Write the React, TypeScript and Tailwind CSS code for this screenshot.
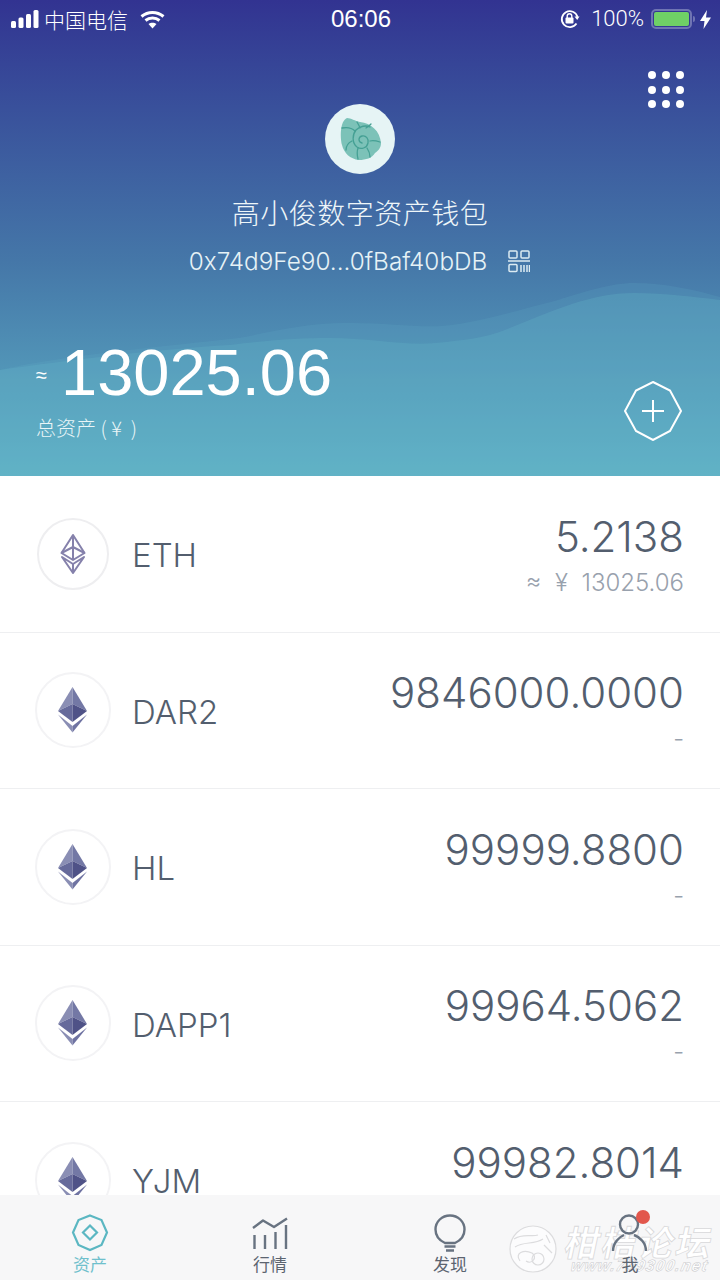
const sans = 'font-["Inter","Noto_Sans_CJK_SC",sans-serif]';
const cjk = 'font-["Noto_Sans_CJK_SC",sans-serif]';

const tokens = [
  { name: 'ETH', amount: '5.2138', sub: '≈  ¥  13025.06', outline: true },
  { name: 'DAR2', amount: '9846000.0000', sub: '-' },
  { name: 'HL', amount: '99999.8800', sub: '-' },
  { name: 'DAPP1', amount: '99964.5062', sub: '-' },
  { name: 'YJM', amount: '99982.8014', sub: '-' },
];

function StatusBar() {
  return (
    <div className="flex h-[38px] items-center justify-between pl-[11px] pr-[9px] text-white">
      <div className="flex w-[240px] items-center">
        <svg width="28" height="18" viewBox="0 0 28 18" fill="white">
          <rect x="0" y="11" width="5" height="7" rx="1.5" />
          <rect x="7.5" y="7.5" width="5" height="10.5" rx="1.5" />
          <rect x="15" y="4" width="5" height="14" rx="1.5" />
          <rect x="22.5" y="0" width="5" height="18" rx="1.5" />
        </svg>
        <span className={`ml-[5px] text-[21px] font-light leading-none ${cjk}`}>中国电信</span>
        <svg className="ml-[12px]" width="25" height="19" viewBox="0 0 25 19" fill="none" stroke="white" strokeWidth="3">
          <path d="M1.5 6.5C8 1 17 1 23.5 6.5" />
          <path d="M5.5 10.5C9.5 7.2 15.5 7.2 19.5 10.5" />
          <path d="M12.5 18.5L8.5 14C10.8 12.2 14.2 12.2 16.5 14Z" fill="white" stroke="none" />
        </svg>
      </div>
      <span className='text-[24px] leading-none font-["Liberation_Sans",sans-serif]'>06:06</span>
      <div className="flex w-[240px] items-center justify-end">
        <svg width="20" height="20" viewBox="0 0 20 20" fill="none" stroke="white" strokeWidth="1.8">
          <path d="M16.5 14.5A8 8 0 1 1 17.5 8" />
          <path d="M14.5 7.5H19.5L17.2 11Z" fill="white" stroke="none" />
          <rect x="5.5" y="8.5" width="8" height="6" rx="1" fill="white" stroke="none" />
          <path d="M7.2 9V7a2.3 2.3 0 0 1 4.6 0v2" strokeWidth="1.4" />
        </svg>
        <span className='ml-[11px] text-[22px] font-light leading-none font-["Roboto",sans-serif]'>100%</span>
        <div className="ml-[7px] flex h-[20px] w-[41px] items-center rounded-[5px] border-2 border-[#6f74b3] p-[1px]">
          <div className="h-full w-full rounded-[2px] bg-[#6fd066]" />
        </div>
        <div className="ml-[1px] h-[6px] w-[2px] rounded-r-sm bg-[#6f74b3]" />
        <svg className="ml-[5px]" width="11" height="19" viewBox="0 0 11 19" fill="white">
          <path d="M7 0L0 11H4.5L3.5 19L11 7.5H6Z" />
        </svg>
      </div>
    </div>
  );
}

function ShellLogo() {
  return (
    <div className="flex h-[70px] w-[70px] items-center justify-center rounded-full bg-[#e6f4f5]">
      <svg width="70" height="70" viewBox="0 0 70 70" fill="none">
        <path d="M22 14C26 14 30 17 35 18C46 19 55 27 56 39C56 44 53 47 50 49C47 54 41 56 34 56C25 55 19 49 17 41C15 33 15 17 22 14Z" fill="#7cc2b8" />
        <g stroke="#45a094" strokeWidth="1.3" strokeLinecap="round">
          <path d="M37 39C33 38 33 33 37 32C41 31 44 35 43 39C42 44 36 46 32 43C27 39 27 31 31 26C35 22 41 21 45 23" />
          <path d="M17 24C22 23 27 24 30 27" />
          <path d="M27 37C23 39 21 42 21 46" />
          <path d="M33 44C32 47 32 51 33 55" />
          <path d="M42 44C44 47 45 50 45 53" />
          <path d="M45 37C48 36 52 37 55 38" />
          <path d="M35 24C34 21 33 20 32 18" />
          <path d="M41 24C44 22 45 21 46 20" />
        </g>
      </svg>
    </div>
  );
}

function QrIcon() {
  return (
    <svg width="22" height="23" viewBox="0 0 22 23" fill="none" stroke="#dcebf2" strokeWidth="1.5">
      <rect x="1" y="1" width="8" height="7" rx="1" />
      <rect x="13" y="1" width="8" height="7" rx="1" />
      <path d="M0 11H22" />
      <rect x="1" y="14.5" width="8" height="7" rx="1" />
      <path d="M13 15V22M16 15V22M19 15V22M21.500 15V22" />
    </svg>
  );
}

function Waves() {
  return (
    <svg className="absolute left-0 top-[280px]" width="720" height="196" viewBox="0 0 720 196">
      <path d="M0 90C70 74 170 66 239 58C280 50 310 43 344 43C390 42 425 50 459 44C495 38 525 28 551 22C585 12 610 3 634 3C665 3 695 10 720 17V196H0Z" fill="#62b3c7" fillOpacity="0.17" />
      <path d="M0 90C70 80 160 69 230 65C270 60 300 58 330 58C370 58 405 66 436 63C465 60 485 58 505 50C550 32 590 13 634 13C665 13 695 17 720 20V196H0Z" fill="#62b3c7" fillOpacity="0.3" />
    </svg>
  );
}

function Header() {
  return (
    <div className="relative h-[476px] shrink-0 overflow-hidden bg-gradient-to-b from-[#323391] via-[#4577a8] via-55% to-[#5fb3c6] text-white">
      <Waves />
      <div className="relative flex h-full flex-col">
        <StatusBar />
        <div className="mr-[36px] mt-[33px] grid w-[36px] grid-cols-3 gap-x-[6.500px] gap-y-[6.500px] self-end">
          {Array.from({ length: 9 }).map((_, i) => (
            <div key={i} className="h-[8px] w-[8px] rounded-full bg-white" />
          ))}
        </div>
        <div className="mt-[-4px] flex flex-col items-center">
          <ShellLogo />
          <div className={`mt-[18px] text-[28px] font-light leading-[40px] tracking-[0.5px] text-[#eef6f9] ${cjk}`}>高小俊数字资产钱包</div>
          <div className="ml-[-1px] mt-[13px] flex items-center">
            <span className={`text-[24.300px] font-[350] leading-[32px] text-[#e6f2f6] ${sans}`}>0x74d9Fe90...0fBaf40bDB</span>
            <span className="ml-[21px] mt-[1px]">
              <QrIcon />
            </span>
          </div>
        </div>
        <div className="mt-auto flex items-end justify-between pb-[34px] pl-[37px] pr-[37px]">
          <div>
            <div className="ml-[-1px] flex items-center">
              <span className='mt-[4px] w-[25px] text-[20px] leading-none font-["Liberation_Sans",sans-serif]'>≈</span>
              <span className='text-[65px] leading-[66px] font-["Liberation_Sans",sans-serif]'>13025.06</span>
            </div>
            <div className={`ml-[-1px] mt-[8px] whitespace-pre text-[20px] font-light leading-[28px] text-[#e9f5f7] ${cjk}`}>总资产 ( ¥  )</div>
          </div>
          <svg width="60" height="60" viewBox="0 0 60 60" fill="none" stroke="white" strokeWidth="2" className="mb-[1px]">
            <path d="M30 1L47 9.500L58 30L47 50L30 59L13 50L2 30L13 9.500Z" />
            <path d="M30 19V41M19 30H41" />
          </svg>
        </div>
      </div>
    </div>
  );
}

function EthIcon({ outline }: { outline?: boolean }) {
  if (outline) {
    return (
      <svg width="26" height="40" viewBox="0 0 26 40" fill="none" stroke="#8581ab" strokeWidth="2" strokeLinejoin="round">
        <path d="M13 1L1.500 19L13 26L24.500 19Z" />
        <path d="M13 1V26M1.500 19L13 13L24.500 19" />
        <path d="M2 23L13 39L24 23L13 30Z" />
        <path d="M13 30V39" />
      </svg>
    );
  }
  return (
    <svg width="30" height="46" viewBox="0 0 30 46">
      <path d="M14.500 0L0 24L14.500 17Z" fill="#8a8eb4" />
      <path d="M14.500 0L29 24L14.500 17Z" fill="#7378a5" />
      <path d="M0 24L14.500 17V35Z" fill="#666a9b" />
      <path d="M29 24L14.500 17V35Z" fill="#4f5287" />
      <path d="M0 27.500L14.500 39V45.500Z" fill="#8a8eb4" />
      <path d="M29 27.500L14.500 39V45.500Z" fill="#6f73a2" />
    </svg>
  );
}

function TokenRow({ name, amount, sub, outline }: (typeof tokens)[number]) {
  return (
    <div className="flex h-[156.500px] shrink-0 items-center justify-between border-b border-[#eeeff1] pl-[35px] pr-[36px]">
      <div className="flex items-center">
        <div className={`flex items-center justify-center rounded-full border-2 ${outline ? 'ml-[2px] mr-[23px] h-[72px] w-[72px] border-[#eeeef0]' : 'mr-[21px] h-[76px] w-[76px] border-[#f3f3f5]'}`}>
          <EthIcon outline={outline} />
        </div>
        <span className={`mt-[4px] text-[33px] font-[350] text-[#535e6e] ${sans}`}>{name}</span>
      </div>
      <div className="flex flex-col items-end pt-[3px]">
        <span className={`text-[42px] font-[350] leading-[48px] text-[#535e6e] ${sans}`}>{amount}</span>
        <span className={`mt-[7px] whitespace-pre text-[24px] font-light leading-[30px] text-[#98a1ad] ${sans}`}>{sub}</span>
      </div>
    </div>
  );
}

function TabItem({ label, active, children }: { label: string; active?: boolean; children: React.ReactNode }) {
  return (
    <div className="relative z-30 flex w-[180px] flex-col items-center">
      <div className="flex h-[40px] items-center justify-center">{children}</div>
      <span className={`text-[17px] leading-[22px] ${active ? 'text-[#6fc0cc]' : 'text-[#5c6470]'} ${cjk}`}>{label}</span>
    </div>
  );
}

function Watermark() {
  return (
    <div className="pointer-events-none absolute bottom-[6px] right-[6px] z-20 flex items-center">
      <svg width="50" height="48" viewBox="0 0 50 48" fill="none" stroke="#dcdcde" strokeWidth="1.200">
        <circle cx="25" cy="24" r="23" fill="#ffffff" fillOpacity="0.65" />
        <path d="M6 14C14 8 24 12 30 10M7 22C16 16 26 20 35 14M12 36C6 28 16 24 24 28C30 32 24 40 18 36" />
        <circle cx="30" cy="34" r="6" />
        <path d="M36 20L44 28M38 10L42 18" />
      </svg>
      <div className="ml-[8px] flex flex-col items-center">
        <span className={`-skew-x-12 text-[35px] font-bold leading-[34px] tracking-[2px] text-white [-webkit-text-stroke:0.8px_#d8d8da] ${cjk}`}>柑桔论坛</span>
        <span className='-skew-x-12 text-[16px] font-bold italic leading-[16px] tracking-[1px] text-white [-webkit-text-stroke:0.5px_#c8c8cb] font-["Liberation_Sans",sans-serif]'>www.739300.net</span>
      </div>
    </div>
  );
}

function TabBar() {
  return (
    <div className="relative z-10 flex h-[85px] shrink-0 items-start justify-between bg-[#f7f7f8] pt-[18px]">
      <TabItem label="资产" active>
        <svg width="38" height="38" viewBox="0 0 38 38" fill="none" stroke="#5bb7c2" strokeWidth="2.200">
          <path d="M19 1.500L30.500 6L36 18.500L30.500 31L19 36L7.500 31L2 18.500L7.500 6Z" />
          <path d="M19 11.500L26 18.500L19 25.500L12 18.500Z" />
        </svg>
      </TabItem>
      <TabItem label="行情">
        <svg width="36" height="33" viewBox="0 0 36 33" fill="none" stroke="#687381" strokeWidth="2.400">
          <path d="M1 11L11 3.500L22 10L35 1.500" strokeLinejoin="round" />
          <path d="M2.500 18V32M13 18V32M23.500 15V32M34 8V32" />
        </svg>
      </TabItem>
      <TabItem label="发现">
        <svg width="32" height="38" viewBox="0 0 32 38" fill="none" stroke="#687381" strokeWidth="2.400">
          <path d="M11 29C5.500 26.500 1.500 21.500 1.500 15.500C1.500 7.500 8 1.500 16 1.500C24 1.500 30.500 7.500 30.500 15.500C30.500 21.500 26.500 26.500 21 29Z" />
          <path d="M10.500 32.500H21.500M12 36.500H20" />
        </svg>
      </TabItem>
      <TabItem label="我">
        <div className="relative">
          <svg width="38" height="38" viewBox="0 0 38 38" fill="none" stroke="#687381" strokeWidth="2.400">
            <circle cx="18" cy="10.500" r="9" />
            <path d="M2 37C2 29 8 23 13 21M35 37C35 29 29 23 23 21" />
          </svg>
          <div className="absolute right-[-1px] top-[-4px] h-[14px] w-[14px] rounded-full bg-[#e2574c]" />
        </div>
      </TabItem>
      <Watermark />
    </div>
  );
}

export default function App() {
  return (
    <div className="flex h-[1280px] w-[720px] flex-col overflow-hidden bg-white">
      <Header />
      <div className="flex min-h-0 flex-1 flex-col overflow-hidden">
        {tokens.map((t) => (
          <TokenRow key={t.name} {...t} />
        ))}
      </div>
      <TabBar />
    </div>
  );
}
